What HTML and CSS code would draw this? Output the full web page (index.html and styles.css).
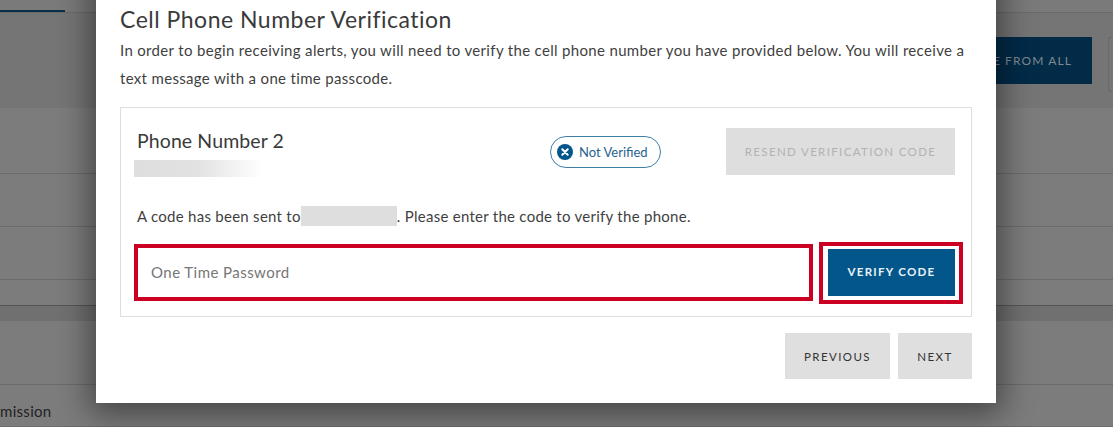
FILE: index.html
```html
<!DOCTYPE html>
<html lang="en">
<head>
<meta charset="utf-8">
<title>Cell Phone Number Verification</title>
<link rel="stylesheet" href="styles.css">
</head>
<body>
<div class="page">
  <div class="tabs"><span class="tab-active"></span></div>
  <div class="toolbar">
    <button class="bg-primary" type="button">E FROM ALL</button>
    <span class="bg-outline"></span>
  </div>
  <div class="row r1"></div>
  <div class="row r2"></div>
  <div class="row r3"></div>
  <div class="row r3b"></div>
  <div class="band"></div>
  <div class="row r4"></div>
  <div class="row r5"><span class="bg-text">mission</span></div>
</div>
<div class="modal">
  <h1 class="title">Cell Phone Number Verification</h1>
  <p class="intro">In order to begin receiving alerts, you will need to verify the cell phone number you have provided below. You will receive a text message with a one time passcode.</p>
  <section class="card">
    <div class="card-head">
      <div class="phone">
        <h2 class="phone-name">Phone Number 2</h2>
        <div class="redact-fade"></div>
      </div>
      <div class="status">
        <svg class="status-icon" viewBox="0 0 16 16" width="16" height="16" aria-hidden="true">
          <circle cx="8" cy="8" r="8" fill="#03568a"/>
          <path d="M5.3 5.3l5.4 5.4M10.7 5.3l-5.4 5.4" stroke="#fff" stroke-width="2" stroke-linecap="round"/>
        </svg>
        <span>Not Verified</span>
      </div>
      <button class="btn btn-disabled" type="button">RESEND VERIFICATION CODE</button>
    </div>
    <p class="sent">A code has been sent to<span class="redact"></span>. Please enter the code to verify the phone.</p>
    <div class="verify-row">
      <input class="otp" type="text" placeholder="One Time Password">
      <div class="verify-frame"><button class="btn btn-primary" type="button">VERIFY CODE</button></div>
    </div>
  </section>
  <div class="actions">
    <button class="btn btn-grey btn-prev" type="button">PREVIOUS</button>
    <button class="btn btn-grey btn-next" type="button">NEXT</button>
  </div>
</div>
</body>
</html>
```
FILE: styles.css
```css
* { box-sizing: border-box; }
html, body { margin: 0; height: 427px; overflow: hidden; }
body { position: relative; background: #7b7b7b; font-family: Lato, "Liberation Sans", sans-serif; color: #333; }

.page { width: 1113px; height: 427px; display: flex; flex-direction: column; }
.tabs { height: 13px; border-bottom: 1px solid #6a6a6a; background: #7a7a7a; }
.tab-active { display: block; width: 65px; height: 12px; border-bottom: 2px solid #0a2f4b; }
.toolbar { height: 95px; background: #757575; display: flex; justify-content: flex-end; align-items: flex-start; padding: 24px 0 0 0; }
.bg-primary { width: 200px; height: 47px; margin-right: 16px; flex: none; border: 0; background: #022b48; color: #7f8a92; font: 400 12px Lato, sans-serif; letter-spacing: 1.1px; text-align: right; padding: 0 20px 0 0; }
.bg-outline { width: 5px; height: 55px; flex: none; border: 1px solid #6a6a6a; border-right: 0; border-radius: 3px 0 0 3px; }
.row { border-bottom: 1px solid #6b6b6b; background: #7c7c7c; }
.r1 { height: 66px; }
.r2 { height: 53px; }
.r3 { height: 53px; }
.r3b { height: 26px; border-bottom: 1px solid #555; }
.band { height: 15px; background: #707070; }
.r4 { height: 64px; }
.r5 { flex: 1; padding: 17px 0 0 0; }
.bg-text { display: block; font-size: 15px; letter-spacing: .3px; color: #222; }

.modal { position: absolute; left: 96px; top: -30px; width: 900px; height: 433px; background: #fff; padding: 0 24px; box-shadow: 0 5px 30px 6px rgba(0,0,0,.45); }
.title { margin: 35px 0 0; font-size: 23px; font-weight: 400; line-height: 28px; letter-spacing: .5px; color: #3a3a3a; }
.intro { margin: 3px 0 0; font-size: 15px; line-height: 28px; letter-spacing: .33px; color: #3f3f3f; }
.card { margin-top: 15px; height: 210px; border: 1px solid #dedede; padding: 20px 16px 0 14px; }
.card-head { display: flex; align-items: flex-start; height: 59px; }
.phone { width: 415px; flex: none; }
.phone-name { margin: 0 0 0 2px; font-size: 19.5px; font-weight: 400; line-height: 26px; color: #3a3a3a; letter-spacing: .1px; }
.redact-fade { width: 128px; height: 17px; margin: 6px 0 0 -1px; background: linear-gradient(90deg, #dedede 0%, #e2e2e2 50%, #fff 100%); }
.status { margin: 8px 0 0 0; width: 111px; height: 32px; flex: none; border: 1px solid #3f80a8; border-radius: 16px; display: flex; align-items: center; gap: 6px; padding-left: 6px; color: #1f6390; font-size: 13px; }
.status-icon { flex: none; }
.btn { border: 0; font-family: Lato, sans-serif; font-size: 11.5px; font-weight: 700; letter-spacing: 1.3px; }
.btn-disabled { width: 229px; height: 47px; margin-left: 65px; flex: none; background: #dedede; color: #b2b2b2; font-weight: 400; letter-spacing: 1.35px; }
.sent { margin: 19px 0 0 2px; font-size: 15px; line-height: 20px; color: #3f3f3f; letter-spacing: .27px; }
.redact { display: inline-block; width: 96px; height: 20px; background: #dedede; vertical-align: top; }
.verify-row { display: flex; align-items: flex-start; margin: 16px 0 0 -1px; }
.otp { width: 679px; height: 57px; flex: none; margin-top: 2px; border: 4px solid #cc0022; padding: 0 13px 2px; font: 15px Lato, sans-serif; letter-spacing: .45px; color: #333; outline: 0; border-radius: 0; }
.otp::placeholder { color: #767676; opacity: 1; }
.verify-frame { margin-left: 6px; flex: none; border: 4px solid #cc0022; padding: 3px 4px 4px 5px; width: 144px; height: 62px; }
.btn-primary { display: block; width: 127px; height: 47px; padding-bottom: 4px; background: #03568a; color: #e9f2f8; }
.actions { display: flex; justify-content: flex-end; gap: 8px; margin-top: 16px; }
.btn-grey { height: 46px; background: #dfdfdf; color: #333; font-weight: 400; letter-spacing: 1.4px; }
.btn-prev { width: 105px; }
.btn-next { width: 74px; }
```
